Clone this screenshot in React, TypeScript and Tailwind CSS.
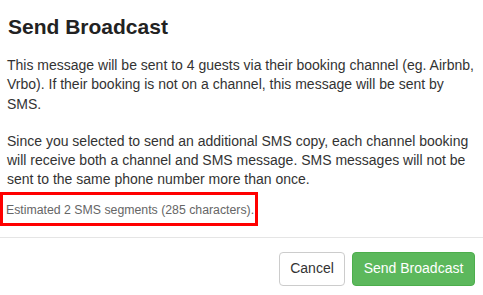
export default function App() {
  return (
    <div
      className="w-[483px] h-[295px] overflow-hidden bg-white text-[#333]"
      style={{ fontFamily: '"Liberation Sans", Arial, sans-serif' }}
    >
      <div className="pt-[16px] px-[8px]">
        <h4 className="text-[21px] font-bold leading-[22px] text-[#222]">Send Broadcast</h4>
      </div>

      <div className="pl-[7px] pt-[18px] w-[477px] text-[14px] leading-[19.3px]">
        <p>
          This message will be sent to 4 guests via their booking channel (eg. Airbnb, Vrbo). If their
          booking is not on a channel, this message will be sent by SMS.
        </p>
        <p className="mt-[18px]">
          Since you selected to send an additional SMS copy, each channel booking will receive both a
          channel and SMS message. SMS messages will not be sent to the same phone number more than once.
        </p>
      </div>

      <div className="mt-[2px] w-[258px] h-[34px] border-[3px] border-[#ff0000] pl-[3px] pt-[7px] text-[12.3px] leading-[17px] text-[#666]">
        Estimated 2 SMS segments (285 characters).
      </div>

      <div className="mt-[11px] border-t border-[#e5e5e5] flex justify-end gap-[7px] pt-[14px] pr-[8px]">
        <button className="h-[34px] w-[66px] rounded-[4px] border border-[#ccc] bg-white text-[14px] text-[#333]">
          Cancel
        </button>
        <button className="h-[34px] w-[123px] rounded-[4px] border border-[#4cae4c] bg-[#5cb85c] text-[14px] text-white">
          Send Broadcast
        </button>
      </div>
    </div>
  )
}
